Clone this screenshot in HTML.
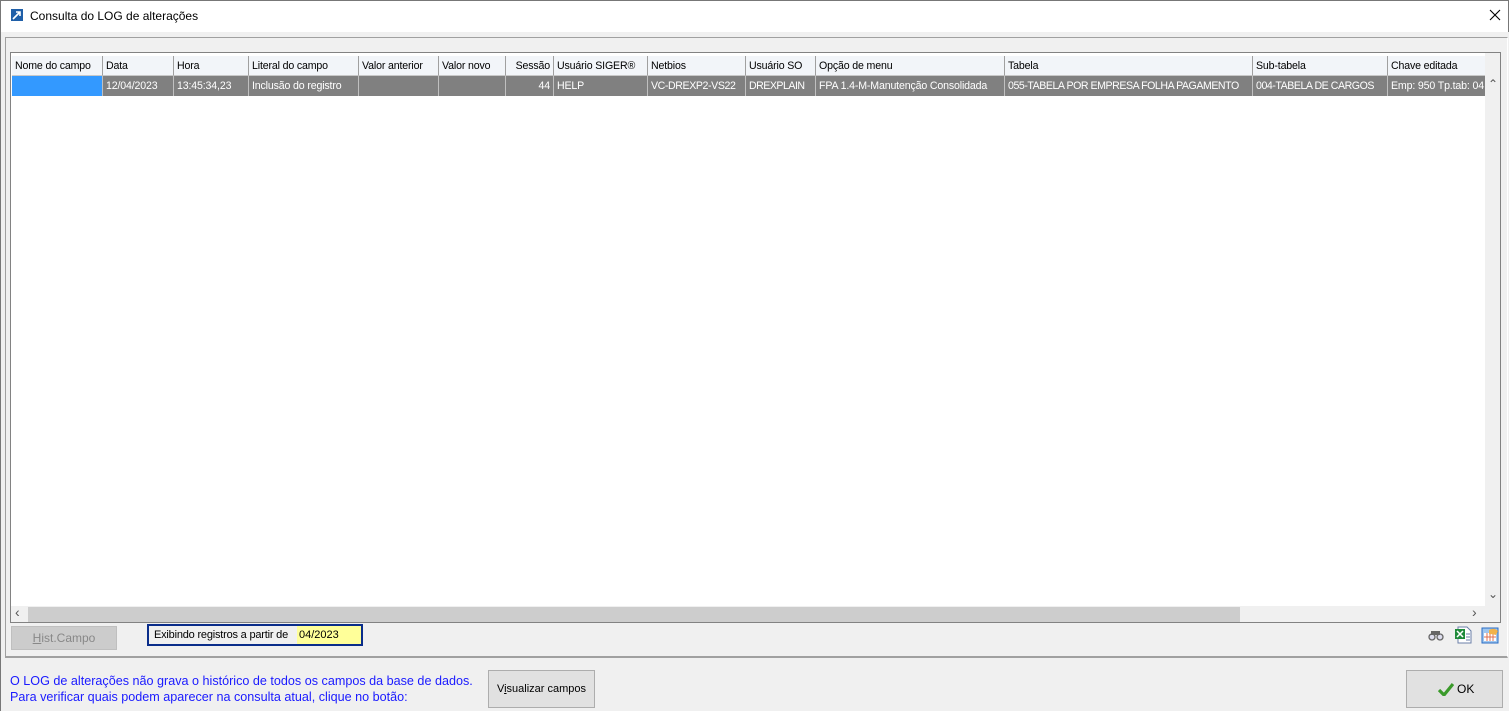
<!DOCTYPE html>
<html><head><meta charset="utf-8"><style>
*{margin:0;padding:0;box-sizing:border-box}
body{width:1509px;height:711px;background:#f0f0f0;font-family:"Liberation Sans",sans-serif;font-size:11px;color:#000;position:relative;overflow:hidden}
.a{position:absolute}
.title{left:0;top:0;width:1509px;height:32px;background:#fff;border-top:1px solid #777;border-left:1px solid #777;border-right:1px solid #777}
.panel{left:5px;top:37px;width:1503px;height:621px;border-top:1px solid #a0a0a0;border-left:1px solid #a0a0a0;border-bottom:2px solid #a0a0a0;border-right:1px solid #fff}
.grid{left:10px;top:52px;width:1491px;height:571px;border:1px solid #828282;background:#fff;overflow:hidden}
.hd,.rw{position:absolute;height:20px;line-height:20px;white-space:nowrap;overflow:hidden;padding-left:3px;font-size:10.6px;letter-spacing:-0.15px}
.hd{top:3px;background:#f2f5f9;border-right:1px solid #a0a0a0;border-bottom:1px solid #c8c8c8;color:#000}
.rw{top:23px;background:#808080;color:#fff;border-right:1px solid #c0c0c0;height:20px}
</style></head><body>
<div class="a" style="left:0;top:0;width:1px;height:711px;background:#777"></div>
<div class="a title"></div>
<svg class="a" style="left:11px;top:9px" width="12" height="12"><rect width="12" height="12" fill="#1f5fa8"/><path d="M2 10 L9 3 M5 3 H9 V7" stroke="#fff" stroke-width="1.6" fill="none"/></svg>
<div class="a" style="left:30px;top:9px;font-size:12px">Consulta do LOG de alterações</div>
<svg class="a" style="left:1489px;top:9px" width="12" height="12"><path d="M1 1 L11 11 M11 1 L1 11" stroke="#000" stroke-width="1.1"/></svg>
<div class="a panel"></div>
<div class="a grid">
<div class="hd" style="left:1px;width:91px">Nome do campo</div>
<div class="hd" style="left:92px;width:71px">Data</div>
<div class="hd" style="left:163px;width:75px">Hora</div>
<div class="hd" style="left:238px;width:110px">Literal do campo</div>
<div class="hd" style="left:348px;width:80px">Valor anterior</div>
<div class="hd" style="left:428px;width:67px">Valor novo</div>
<div class="hd" style="left:495px;width:48px;text-align:right;padding-right:3px">Sessão</div>
<div class="hd" style="left:543px;width:94px">Usuário SIGER®</div>
<div class="hd" style="left:637px;width:98px">Netbios</div>
<div class="hd" style="left:735px;width:70px">Usuário SO</div>
<div class="hd" style="left:805px;width:189px">Opção de menu</div>
<div class="hd" style="left:994px;width:248px">Tabela</div>
<div class="hd" style="left:1242px;width:135px">Sub-tabela</div>
<div class="hd" style="left:1377px;width:97px;border-right:none">Chave editada</div>
<div class="rw" style="left:1px;width:91px;background:#3399ff"></div>
<div class="rw" style="left:92px;width:71px">12/04/2023</div>
<div class="rw" style="left:163px;width:75px">13:45:34,23</div>
<div class="rw" style="left:238px;width:110px">Inclusão do registro</div>
<div class="rw" style="left:348px;width:80px"></div>
<div class="rw" style="left:428px;width:67px"></div>
<div class="rw" style="left:495px;width:48px;text-align:right;padding-right:3px">44</div>
<div class="rw" style="left:543px;width:94px">HELP</div>
<div class="rw" style="left:637px;width:98px;letter-spacing:-0.4px">VC-DREXP2-VS22</div>
<div class="rw" style="left:735px;width:70px;letter-spacing:-0.5px">DREXPLAIN</div>
<div class="rw" style="left:805px;width:189px">FPA 1.4-M-Manutenção Consolidada</div>
<div class="rw" style="left:994px;width:248px;letter-spacing:-0.45px">055-TABELA POR EMPRESA FOLHA PAGAMENTO</div>
<div class="rw" style="left:1242px;width:135px;letter-spacing:-0.45px">004-TABELA DE CARGOS</div>
<div class="rw" style="left:1377px;width:97px;border-right:none">Emp: 950 Tp.tab: 04</div>
<div class="a" style="left:1474px;top:0;width:16px;height:553px;background:#f0f0f0"></div>
<div class="a" style="left:1477px;top:24px;font-size:12px;color:#555">&#8963;</div>
<div class="a" style="left:1477px;top:534px;font-size:12px;color:#555">&#8964;</div>
<div class="a" style="left:0;top:553px;width:1474px;height:17px;background:#f0f0f0"></div>
<div class="a" style="left:17px;top:554px;width:1212px;height:15px;background:#cdcdcd"></div>
<div class="a" style="left:4px;top:551px;font-size:14px;color:#555">&#8249;</div>
<div class="a" style="left:1461px;top:551px;font-size:14px;color:#555">&#8250;</div>
<div class="a" style="left:1474px;top:553px;width:16px;height:17px;background:#f0f0f0"></div>
</div>
<div class="a" style="left:11px;top:626px;width:106px;height:24px;background:#cccccc;border:1px solid #bfbfbf;color:#888;font-size:12px;text-align:center;line-height:22px"><u>H</u>ist.Campo</div>
<div class="a" style="left:147px;top:624px;width:216px;height:22px;border:2px solid #0a2d8a;background:#f0f0f0"></div>
<div class="a" style="left:154px;top:629px;font-size:11px;letter-spacing:-0.2px">Exibindo registros a partir de</div>
<div class="a" style="left:297px;top:626px;width:64px;height:18px;background:#ffff99;line-height:18px;padding-left:2px;font-size:11px">04/2023</div>
<svg class="a" style="left:1428px;top:628px" width="16" height="14"><circle cx="4" cy="9" r="3" fill="#dde" stroke="#666" stroke-width="1.3"/><circle cx="12" cy="9" r="3" fill="#dde" stroke="#666" stroke-width="1.3"/><rect x="3" y="3" width="9" height="4" fill="#666"/></svg>
<svg class="a" style="left:1454px;top:626px" width="18" height="18"><path d="M4 1 H13 L17 5 V17 H4 Z" fill="#fff" stroke="#6b7fa8"/><rect x="1" y="3" width="10" height="10" fill="#1f8a3a"/><path d="M3 5 L9 11 M9 5 L3 11" stroke="#fff" stroke-width="1.5"/><path d="M12 8 H16 M12 11 H16 M12 14 H16" stroke="#6b7fa8"/></svg>
<svg class="a" style="left:1481px;top:626px" width="18" height="18"><rect x="1" y="2" width="16" height="15" fill="#9fc6ee" stroke="#2a6cc4"/><rect x="3" y="7" width="12" height="8" fill="#fff"/><path d="M6 7 V15 M9 7 V15 M12 7 V15 M3 11 H15" stroke="#e07050"/><path d="M8 4 Q13 1 17 5 L15 9 Q12 8 8 8 Z" fill="#f2b24a"/></svg>
<div class="a" style="left:10px;top:673px;color:#1a1aff;font-size:12.6px;line-height:16px">O LOG de alterações não grava o histórico de todos os campos da base de dados.<br>Para verificar quais podem aparecer na consulta atual, clique no botão:</div>
<div class="a" style="left:488px;top:670px;width:107px;height:38px;background:#e1e1e1;border:1px solid #adadad;text-align:center;line-height:36px;font-size:11px">V<u>i</u>sualizar campos</div>
<div class="a" style="left:1406px;top:670px;width:97px;height:38px;background:#e1e1e1;border:1px solid #adadad;line-height:36px;font-size:12px"><svg style="position:absolute;left:31px;top:11px" width="16" height="14"><path d="M1 8 L6 13 L15 2" stroke="#3a9a2a" stroke-width="3.2" fill="none"/></svg><span style="position:absolute;left:50px">OK</span></div>
</body></html>
